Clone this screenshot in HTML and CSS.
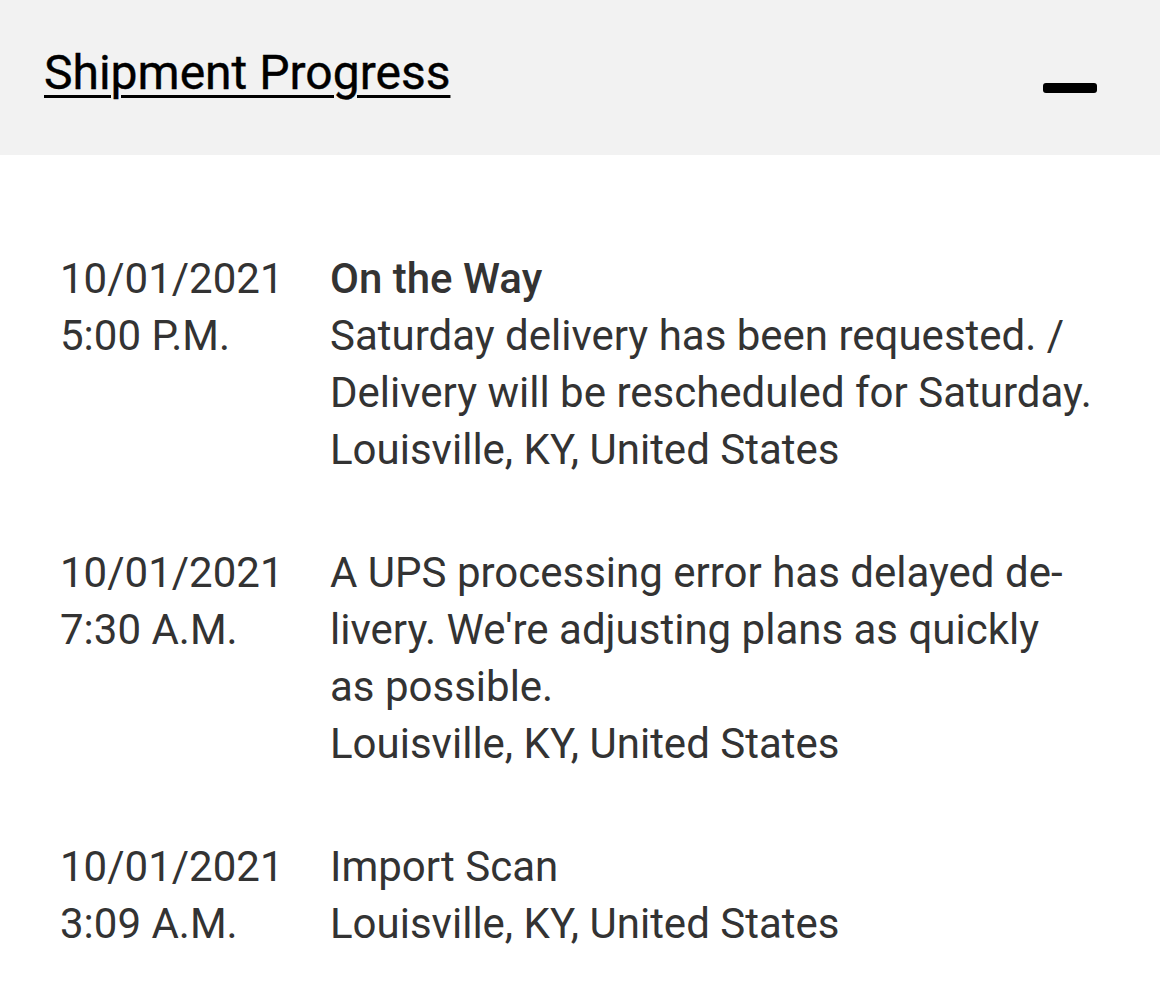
FILE: index.html
```html
<!DOCTYPE html>
<html lang="en">
<head>
    <meta charset="UTF-8">
    <title>Shipment Progress</title>
    <link rel="stylesheet" href="styles.css">
</head>
<body>
    <div class="panel_head">
        <a class="panel_title" href="#">Shipment Progress</a>
        <span class="collapse_btn"></span>
    </div>
    <div class="progress_list">
        <div class="progress_row">
            <div class="progress_date">10/01/2021<br>5:00 P.M.</div>
            <div class="progress_info">
                <div class="progress_status">On the Way</div>
                <div>Saturday delivery has been requested. / Delivery will be rescheduled for Saturday.</div>
                <div>Louisville, KY, United States</div>
            </div>
        </div>
        <div class="progress_row">
            <div class="progress_date">10/01/2021<br>7:30 A.M.</div>
            <div class="progress_info">
                <div>A UPS processing error has delayed de&shy;livery. We're adjusting plans as quickly as possible.</div>
                <div>Louisville, KY, United States</div>
            </div>
        </div>
        <div class="progress_row">
            <div class="progress_date">10/01/2021<br>3:09 A.M.</div>
            <div class="progress_info">
                <div>Import Scan</div>
                <div>Louisville, KY, United States</div>
            </div>
        </div>
    </div>
</body>
</html>
```

FILE: styles.css
```css
body {
    margin: 0;
    background-color: #ffffff;
    font-family: Roboto, "Liberation Sans", sans-serif;
    color: #333333;
}

.panel_head {
    display: flex;
    align-items: center;
    justify-content: space-between;
    height: 155px;
    padding: 0 63px 0 44px;
    background-color: #f2f2f2;
}

.panel_title {
    color: #000000;
    font-size: 48px;
    text-decoration: underline;
    text-decoration-thickness: 3px;
    text-underline-offset: 6px;
    margin-top: -10px;
    -webkit-text-stroke: 0.4px #000000;
}

.collapse_btn {
    display: block;
    width: 54px;
    height: 10px;
    border-radius: 3px;
    background-color: #000000;
    margin-top: 20px;
}

.progress_list {
    padding: 95px 40px 0 60px;
}

.progress_row {
    display: flex;
    font-size: 42px;
    line-height: 57px;
    margin-bottom: 66px;
}

.progress_date {
    flex: 0 0 270px;
}

.progress_info {
    width: 762px;
}

.progress_status {
    font-weight: 500;
}
```
